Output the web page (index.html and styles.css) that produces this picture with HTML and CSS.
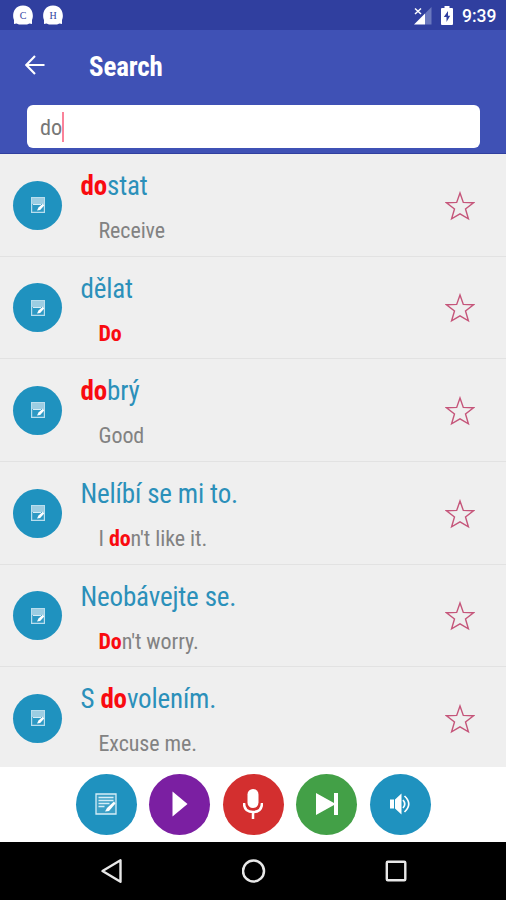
FILE: index.html
```html
<!DOCTYPE html>
<html lang="en">
<head>
<meta charset="utf-8">
<title>Search</title>
<link rel="stylesheet" href="styles.css">
</head>
<body>
<svg class="defs" width="0" height="0">
  <symbol id="note" viewBox="0 0 22 22">
    <path d="M1 1h20v20H1z" fill="#ffffff22" stroke="#d5edf7" stroke-width="1.3"/>
    <path d="M3.500 4.500h15M3.500 7.500h15M3.500 10.500h11M3.500 13.500h6" stroke="#d5edf7" stroke-width="1.500"/>
    <path d="M10 18.500l2-3.500 7-6.500 1.500 2-6.500 7.500z" fill="#fff"/>
  </symbol>
  <symbol id="note-small" viewBox="0 0 14 16">
    <path d="M.6.600h12.800v14.800H.6z" fill="#2d99c4" stroke="#b9deee" stroke-width="1.200"/>
    <path d="M1 1h12v6H1z" fill="#9ccde2"/>
    <path d="M2 7.500h8" stroke="#d5edf7"/>
    <path d="M6 13.500l1.500-3L12 6.500l1.200 2-4 4.500z" fill="#fff"/>
  </symbol>
  <symbol id="star" viewBox="0 0 30 30">
    <path d="M15 2l3.300 9.400 10.200.3-8 6.200 2.900 9.900L15 22.800l-8.400 5 2.900-9.900-8-6.200 10.200-.3z" fill="none" stroke="#c5557a" stroke-width="1.400"/>
  </symbol>
  <symbol id="ghost" viewBox="0 0 20 20">
    <path d="M1 19v-4C-1 11 0 .5 10 .5S21 11 19 15v4l-2.500-.5L14 19.500H6l-2.500-1z" fill="#fff"/>
  </symbol>
</svg>
<div class="status">
  <div class="notices">
    <span class="ghost"><svg><use href="#ghost"/></svg><b>C</b></span>
    <span class="ghost"><svg><use href="#ghost"/></svg><b>H</b></span>
  </div>
  <svg class="signal" viewBox="0 0 18 18"><path d="M17.500 0v17.500H11V6.500z" fill="#6a78be"/><path d="M0 17.500L11 6.500v11z" fill="#fff"/><path d="M1 1.500l6 5.500M7 1.500L1 7" stroke="#fff" stroke-width="1.500"/></svg>
  <svg class="battery" viewBox="0 0 12 19"><path d="M3.500 0h5v2H11q1 0 1 1v15q0 1-1 1H1q-1 0-1-1V3q0-1 1-1h2.500z" fill="#fff"/><path d="M7 5L2.800 11H5.500V16L9.200 9.700H7z" fill="#303f9f"/></svg>
  <span class="clock">9:39</span>
</div>
<header class="appbar">
  <div class="titlebar">
    <svg class="back" viewBox="0 0 20 20"><path d="M19.500 10H1.500M10 1L1.300 10l8.700 9" fill="none" stroke="#fff" stroke-width="2.100"/></svg>
    <h1>Search</h1>
  </div>
  <div class="field"><span>do</span><i class="caret"></i></div>
</header>
<main class="list">
  <article class="row"><span class="badge"><svg><use href="#note-small"/></svg></span><div class="words"><h2><b>do</b>stat</h2><p>Receive</p></div><svg class="star"><use href="#star"/></svg></article>
  <article class="row"><span class="badge"><svg><use href="#note-small"/></svg></span><div class="words"><h2>dělat</h2><p><b>Do</b></p></div><svg class="star"><use href="#star"/></svg></article>
  <article class="row"><span class="badge"><svg><use href="#note-small"/></svg></span><div class="words"><h2><b>do</b>brý</h2><p>Good</p></div><svg class="star"><use href="#star"/></svg></article>
  <article class="row"><span class="badge"><svg><use href="#note-small"/></svg></span><div class="words"><h2>Nelíbí se mi to.</h2><p>I <b>do</b>n't like it.</p></div><svg class="star"><use href="#star"/></svg></article>
  <article class="row"><span class="badge"><svg><use href="#note-small"/></svg></span><div class="words"><h2>Neobávejte se.</h2><p><b>Do</b>n't worry.</p></div><svg class="star"><use href="#star"/></svg></article>
  <article class="row"><span class="badge"><svg><use href="#note-small"/></svg></span><div class="words"><h2>S <b>do</b>volením.</h2><p>Excuse me.</p></div><svg class="star"><use href="#star"/></svg></article>
</main>
<div class="tools">
  <span class="tool blue"><svg width="22" height="22"><use href="#note"/></svg></span>
  <span class="tool purple"><svg width="16" height="26" viewBox="0 0 16 26"><path d="M.5.500L15.500 13 .5 25.500z" fill="#fff"/></svg></span>
  <span class="tool red"><svg width="20" height="30" viewBox="0 0 20 30"><rect x="4.500" y="0" width="11" height="19" rx="5.500" fill="#fff"/><path d="M1 14q0 9 9 9t9-9M10 23v7" fill="none" stroke="#fff" stroke-width="2.500"/></svg></span>
  <span class="tool green"><svg width="22" height="22" viewBox="0 0 22 22"><path d="M0 0l18 10V0h4v22h-4V12L0 22z" fill="#fff"/></svg></span>
  <span class="tool blue"><svg width="22" height="22" viewBox="0 0 22 22"><path d="M1 6.500h4v9H1zM6 6.500l6.500-6v21L6 15.500z" fill="#fff"/><path d="M14 7q3.500 4 0 8M15.500 3q8.500 8 0 16" fill="none" stroke="#fff" stroke-width="1.700"/></svg></span>
</div>
<nav class="nav">
  <svg viewBox="0 0 24 26"><path d="M20.500 2.300v21.400L2.500 13z" fill="none" stroke="#e8e8e8" stroke-width="2.400" stroke-linejoin="round"/></svg>
  <svg viewBox="0 0 24 26"><circle cx="11.500" cy="13" r="10.500" fill="none" stroke="#e8e8e8" stroke-width="2.500"/></svg>
  <svg viewBox="0 0 24 26"><rect x="2.800" y="3.800" width="18.500" height="18.500" rx="1" fill="none" stroke="#e8e8e8" stroke-width="2.400"/></svg>
</nav>
</body>
</html>
```
FILE: styles.css
```css
* { box-sizing: border-box; margin: 0; padding: 0; }
body {
  width: 506px; height: 900px; overflow: hidden;
  display: flex; flex-direction: column;
  background: #fff;
  font-family: "Roboto Condensed", Roboto, sans-serif;
  font-stretch: 75%;
}
svg { display: block; flex: none; }
.defs { position: absolute; }
.status { height: 30px; flex: none; background: #303f9f; display: flex; align-items: center; padding: 1px 9px 0 13px; }
.notices { display: flex; gap: 10px; flex: 1; }
.ghost { display: grid; width: 20px; height: 20px; place-items: center; margin-top: -1px; }
.ghost > * { grid-area: 1 / 1; }
.ghost svg { width: 20px; height: 20px; }
.ghost b { font: 10px "Liberation Serif", serif; color: #303f9f; }
.signal { width: 18px; height: 18px; margin-right: 9px; }
.battery { width: 12px; height: 19px; margin-right: 9px; }
.clock { font: 500 17.500px/20px Roboto, sans-serif; color: #fff; width: 35px; white-space: nowrap; }
.appbar { height: 124px; flex: none; background: #3f51b5; border-bottom: 1px solid #303f9f; padding: 0 26px 0 27px; }
.titlebar { height: 75px; display: flex; align-items: center; padding-right: 0; margin-left: -2px; }
.back { width: 20px; height: 20px; margin: -6px 44px 0 0; }
h1 { font-size: 27px; line-height: 32px; letter-spacing: -.18px; font-weight: 700; color: #fff; margin-top: -2px; }
.field { height: 43px; background: #fff; border-radius: 6px; display: flex; align-items: center; padding: 1px 0 0 13px; font-size: 22.300px; color: #777; }
.caret { width: 2px; height: 30px; background: #fa8299; }
.list { height: 613px; flex: none; background: #efefef; overflow: hidden; }
.row { height: 102.700px; display: flex; align-items: flex-start; padding: 26.500px 31px 0 13px; border-bottom: 1px solid #e2e2e2; }
.badge { width: 49px; height: 49px; flex: none; border-radius: 50%; background: #1f92bf; display: grid; place-items: center; margin-right: 18.500px; }
.badge svg { width: 14px; height: 16px; }
.words { flex: 1; margin-top: -11.500px; white-space: nowrap; }
h2 { font-size: 27px; line-height: 34px; letter-spacing: -.16px; font-weight: 400; color: #2b90ba; }
p { font-size: 22px; line-height: 28px; letter-spacing: -.08px; color: #828282; padding-left: 18px; margin-top: 14px; }
.words b { color: #f90b10; font-weight: 700; }
.star { width: 30px; height: 30px; margin-top: 10px; }
.tools { height: 75px; flex: none; display: flex; justify-content: center; gap: 12.500px; padding-top: 6.500px; }
.tool { width: 61px; height: 61px; border-radius: 50%; display: grid; place-items: center; }
.blue { background: #1f92bf; }
.purple { background: #7b1fa2; }
.red { background: #d32f2f; }
.green { background: #43a047; }
.nav { flex: 1; background: #000; display: flex; justify-content: space-between; padding: 16px 98px 0 100px; }
.nav svg { width: 24px; height: 26px; }
```
